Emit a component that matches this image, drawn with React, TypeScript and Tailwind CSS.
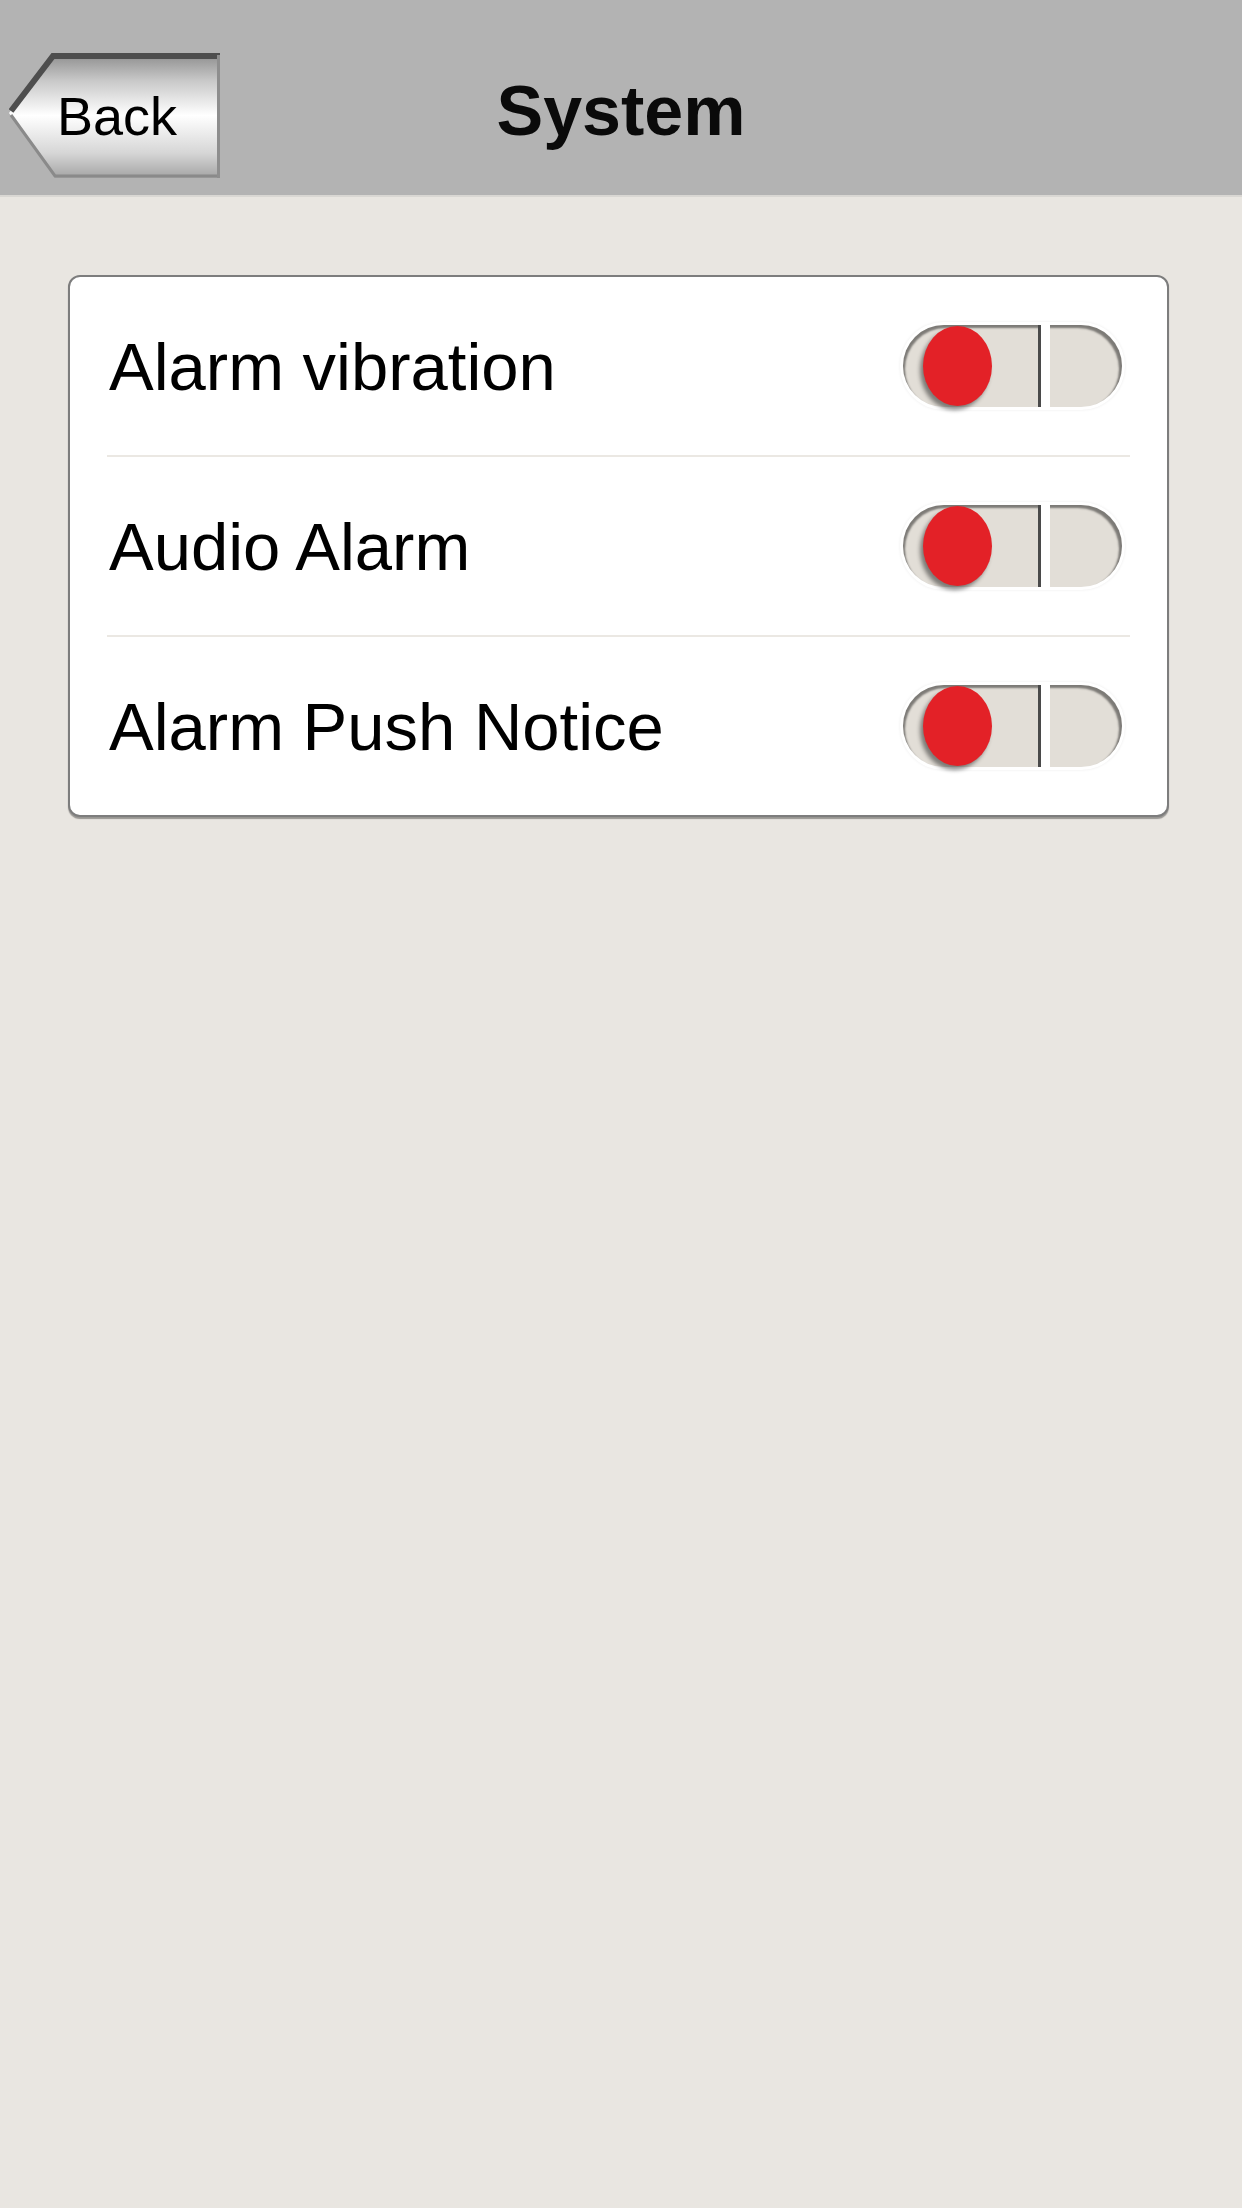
import React from "react";

const font = { fontFamily: '"Liberation Sans", Arial, Helvetica, sans-serif' };

function BackButton() {
  return (
    <button type="button" className="relative ml-[9px] flex h-[125px] w-[211px] items-center">
      <svg className="absolute inset-0" width="211" height="125" viewBox="0 0 211 125">
        <defs>
          <linearGradient id="backFill" x1="0" y1="0" x2="0" y2="1">
            <stop offset="0" stopColor="#8c8c8c" />
            <stop offset="0.22" stopColor="#c8c8c8" />
            <stop offset="0.5" stopColor="#ffffff" />
            <stop offset="0.8" stopColor="#d6d6d6" />
            <stop offset="1" stopColor="#a4a4a4" />
          </linearGradient>
        </defs>
        <polygon points="44,0 211,0 211,125 46,125 0,60" fill="url(#backFill)" />
        <polyline points="2,58 44,3 211,3" fill="none" stroke="#4e4e4e" strokeWidth="6" />
        <polyline points="2,62 46,123 211,123" fill="none" stroke="#8a8a8a" strokeWidth="3" />
        <line x1="209.5" y1="2" x2="209.5" y2="125" stroke="#8e8e8e" strokeWidth="3" />
      </svg>
      <span className="relative pl-[48px] text-[54px] leading-none text-black" style={font}>
        Back
      </span>
    </button>
  );
}

function Toggle() {
  return (
    <div className="relative h-[82px] w-[219px] shrink-0">
      <div className="absolute -inset-[3px] rounded-full bg-white shadow-[0_0_3px_rgba(0,0,0,0.08)]" />
      <div className="absolute left-0 top-0 h-[82px] w-[138px] rounded-l-full border-r-[3px] border-[#4a4a4a] bg-[#e2ded7] shadow-[inset_2px_3px_2px_rgba(0,0,0,0.45)]" />
      <div className="absolute left-[147px] top-0 h-[82px] w-[72px] rounded-r-full bg-[#e2ded7] shadow-[inset_-3px_3px_2px_rgba(0,0,0,0.45)]" />
      <div className="absolute left-[20px] top-[1px] h-[80px] w-[69px] rounded-[50%] bg-[#e32127] shadow-[-3px_4px_4px_rgba(0,0,0,0.45)]" />
    </div>
  );
}

const rows = ["Alarm vibration", "Audio Alarm", "Alarm Push Notice"];

export default function App() {
  return (
    <div className="min-h-[2208px] w-[1242px] bg-[#e9e6e1]" style={font}>
      {/* Header */}
      <header className="grid h-[197px] grid-cols-[1fr_auto_1fr] items-center border-b-2 border-[#d9d7d3] bg-[#b3b3b3] pt-[30px]">
        <div className="mt-[6px] flex items-center">
          <BackButton />
        </div>
        <h1 className="mb-[4px] text-[70px] font-bold leading-none text-[#0a0a0a]">System</h1>
        <div />
      </header>

      {/* Settings card */}
      <div className="ml-[68px] mt-[78px] w-[1101px] rounded-[12px] border-2 border-[#7d7d7d] bg-white shadow-[0_2px_1px_rgba(0,0,0,0.35)]">
        {rows.map((label, i) => (
          <div key={label}>
            {i > 0 && <div className="mx-[37px] h-[2px] bg-[#ebe8e3]" />}
            <div className="flex h-[178px] items-center justify-between pl-[39px] pr-[45px]">
              <span className="text-[67px] leading-none text-black">{label}</span>
              <Toggle />
            </div>
          </div>
        ))}
      </div>
    </div>
  );
}
